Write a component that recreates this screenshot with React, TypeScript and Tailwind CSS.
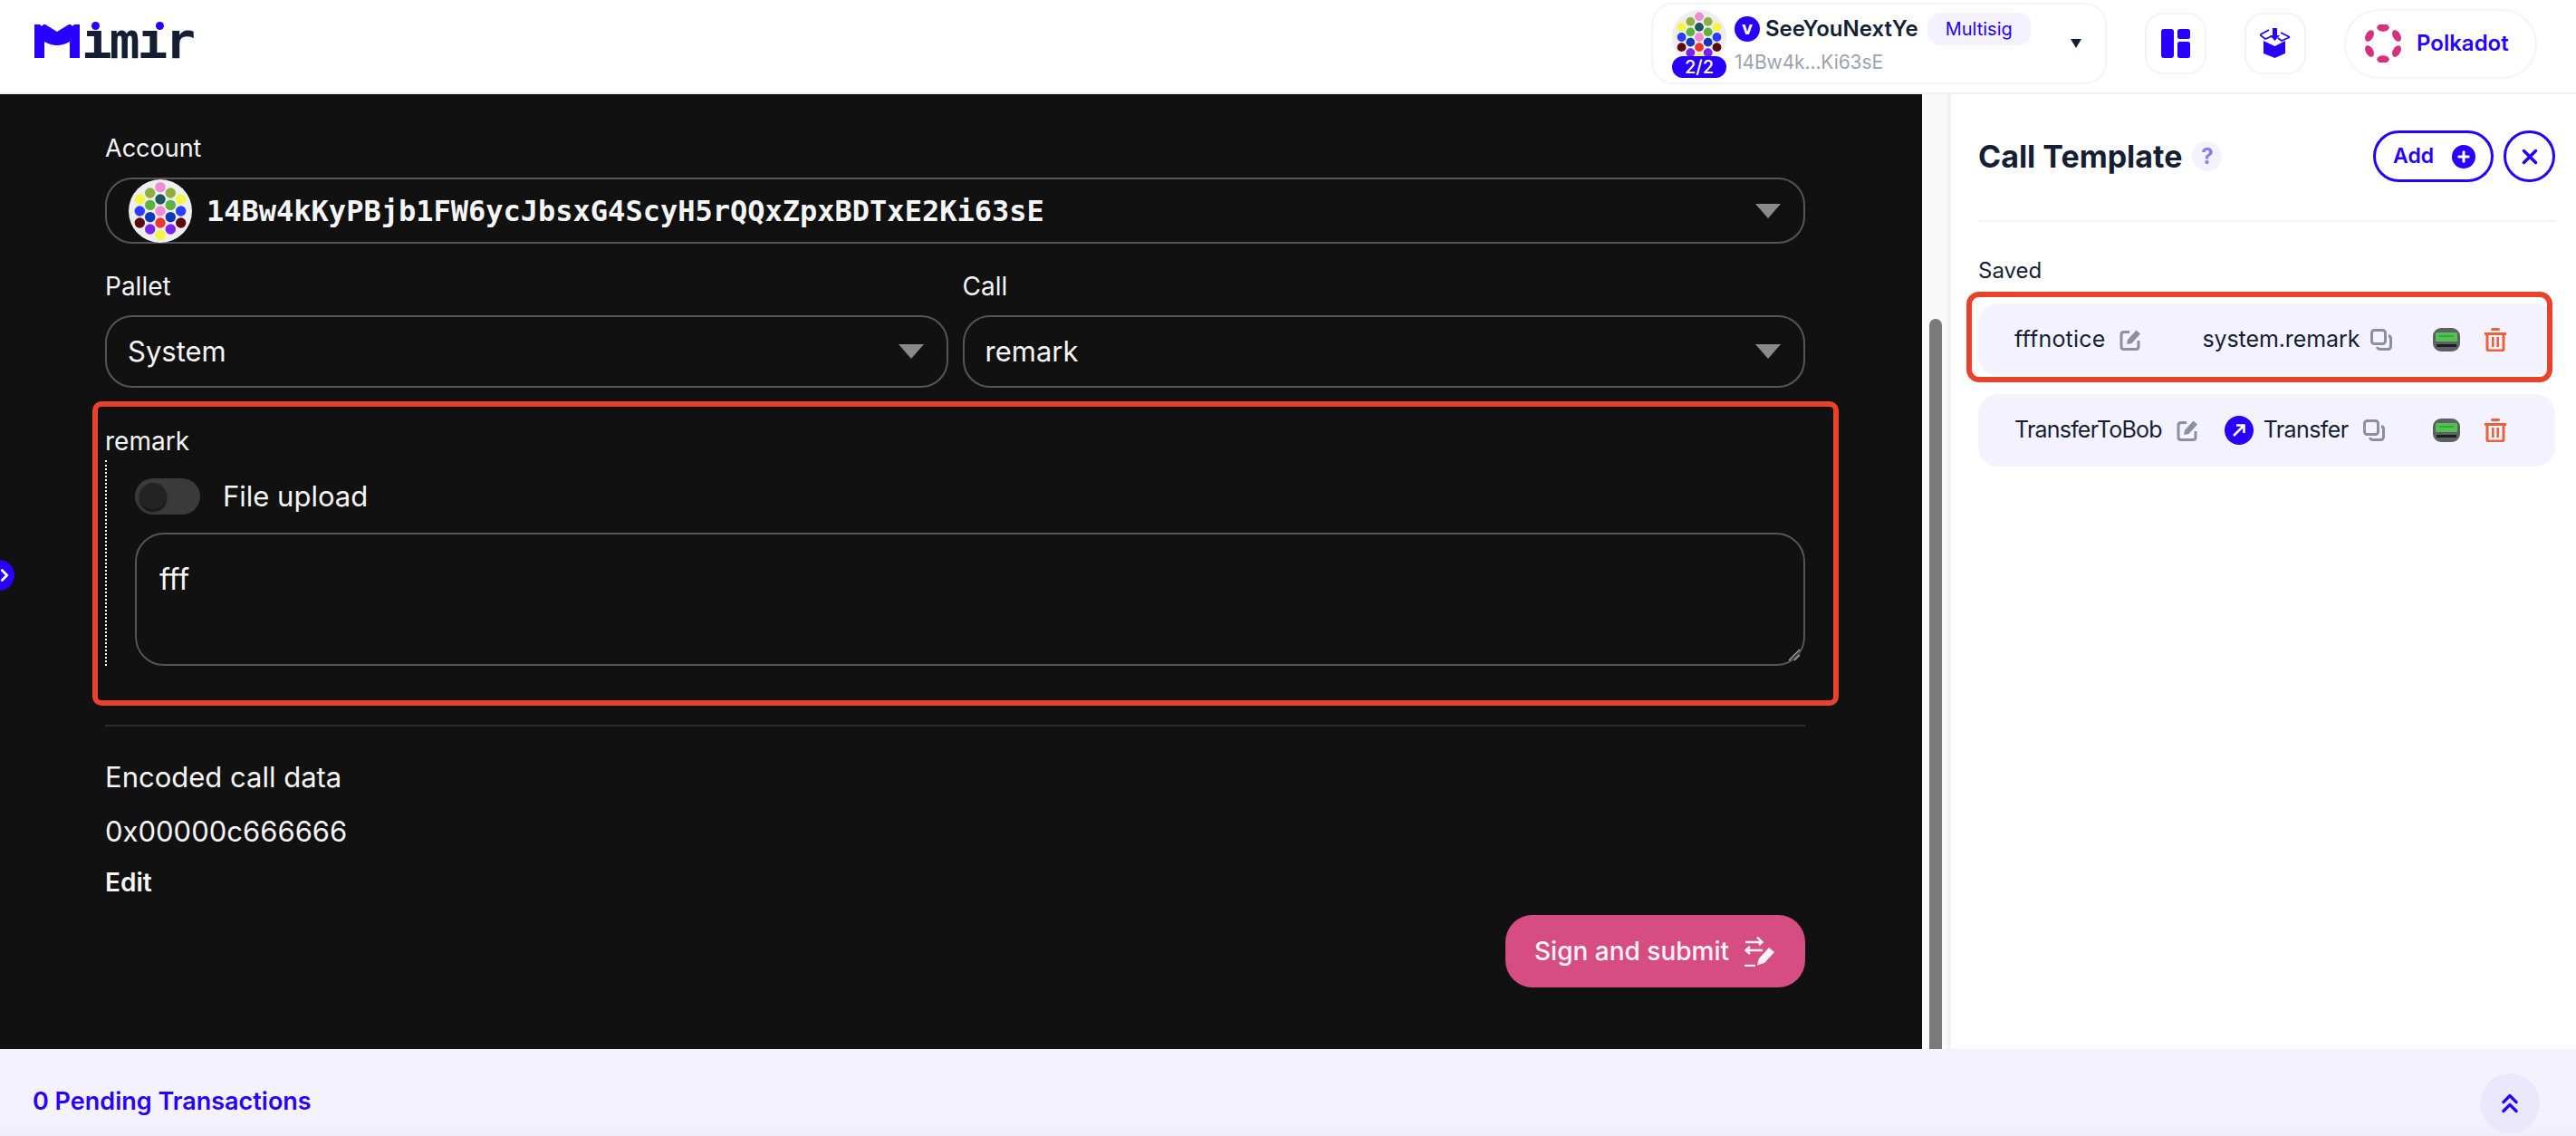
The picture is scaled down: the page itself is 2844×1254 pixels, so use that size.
import React from "react";
import { ChevronRight, ChevronsUp, Plus, X } from "lucide-react";

const BLUE = "#2700FF";

// polkadot style identicon, offsets are from the circle center
const DOTS: [number, number, string][] = [
	[0, -26.4, "#f08ad4"],
	[-11.3, -20, "#8fb040"],
	[11.3, -20, "#8fb040"],
	[-22.7, -13, "#f5f545"],
	[0, -13, "#1f5560"],
	[22.7, -13, "#f5f545"],
	[-11.3, -6.6, "#5cb33c"],
	[11.3, -6.6, "#5cb33c"],
	[-22.7, 0, "#2a3cff"],
	[0, 0, "#f08ad4"],
	[22.7, 0, "#2a3cff"],
	[-11.3, 6.6, "#1038b8"],
	[11.3, 6.6, "#1038b8"],
	[-22.7, 13, "#5a0a10"],
	[0, 13, "#ee3333"],
	[22.7, 13, "#5a0a10"],
	[-11.3, 20, "#7a22ee"],
	[11.3, 20, "#7a22ee"],
	[0, 26.4, "#f5f545"],
];

const Identicon = ({ className }: { className: string }) => (
	<svg viewBox="-35 -35 70 70" className={className}>
		<circle r="35" fill="#eeeeee" />
		{DOTS.map(([x, y, c], i) => (
			<circle key={i} cx={x} cy={y} r="5.7" fill={c} />
		))}
	</svg>
);

const MLogo = () => (
	<svg viewBox="0 0 50 37" className="w-[50px] h-[37px] shrink-0">
		<path d="M0 0 L6 0 Q8 3 10 0 L12 0 L25 8 L38 0 L40 0 Q42 3 44 0 L50 0 L50 37 L39 37 L39 19 Q25 27 11 19 L11 37 L0 37 Z" fill={BLUE} />
	</svg>
);

const Caret = () => (
	<svg viewBox="0 0 28 16" className="w-[28px] h-[16px] shrink-0">
		<path d="M0 0 H28 L14 16 Z" fill="#8a8a8a" />
	</svg>
);

const EditIcon = () => (
	<svg viewBox="0 0 24 24" className="w-[24px] h-[24px] shrink-0">
		<path d="M11 3.5 H5 Q2 3.5 2 6.5 V19.5 Q2 22.5 5 22.5 H18 Q21 22.5 21 19.5 V13" fill="none" stroke="#8e8e9c" strokeWidth="3" />
		<path d="M8 17 L9 12 L18.5 1.5 L23 5.5 L13.5 16 Z" fill="#8e8e9c" />
	</svg>
);

const CopyIcon = () => (
	<svg viewBox="0 0 24 24" className="w-[24px] h-[24px] shrink-0">
		<rect x="1.5" y="1.5" width="15" height="15" rx="3" fill="none" stroke="#8e8e9c" strokeWidth="3" />
		<path d="M20 7.5 Q22.5 8 22.5 11 V19 Q22.5 22.5 19 22.5 H11 Q8 22.5 7.5 20" fill="none" stroke="#8e8e9c" strokeWidth="3" />
	</svg>
);

const PagerIcon = () => (
	<svg viewBox="0 0 30 26" className="w-[30px] h-[26px] shrink-0">
		<rect x="0" y="0" width="30" height="26" rx="9" fill="#5f6064" />
		<rect x="3" y="5" width="24" height="10" rx="1" fill="#4fc24f" />
		<rect x="7" y="8" width="16" height="2" fill="#3aa53c" />
		<rect x="4" y="18" width="22" height="3" fill="#1d1d20" />
	</svg>
);

const TrashIcon = () => (
	<svg viewBox="0 0 24 26" className="w-[24px] h-[26px] shrink-0">
		<rect x="7" y="0" width="10" height="3" rx="1.5" fill="#E8633A" />
		<rect x="0" y="5" width="24" height="3" fill="#E8633A" />
		<path d="M3 8 V23 Q3 25 5 25 H19 Q21 25 21 23 V8" fill="none" stroke="#E8633A" strokeWidth="3" />
		<rect x="8" y="10" width="2.6" height="11" fill="#E8633A" />
		<rect x="13.4" y="10" width="2.6" height="11" fill="#E8633A" />
	</svg>
);

const SignIcon = () => (
	<svg viewBox="0 0 34 34" className="w-[34px] h-[34px]" fill="none" stroke="#fdf3f8" strokeWidth="2.4">
		<path d="M1 7 H19 M14 1.5 L19.5 7 L16 10" />
		<path d="M20 16 H2 M6 12 L1.5 16 L6 20" />
		<path d="M0 33 H12" />
		<path d="M14 32.5 L16 25 L27 13 L33 18 L22 30 Z" fill="#fdf3f8" stroke="none" />
	</svg>
);

const LayoutIcon = () => (
	<svg viewBox="0 0 32 32" className="w-[32px] h-[32px]">
		<rect x="0" y="0" width="14" height="32" rx="3" fill={BLUE} />
		<rect x="18" y="0" width="14" height="11" rx="2.5" fill={BLUE} />
		<rect x="18" y="14" width="14" height="18" rx="2.5" fill={BLUE} />
	</svg>
);

const BoxIcon = () => (
	<svg viewBox="0 0 34 34" className="w-[34px] h-[34px]">
		<path d="M4 14 L16.5 20 L28 14 V28 L16.5 33 L4 28 Z" fill={BLUE} />
		<path d="M14 0 H19 V8 H22 L16.5 14 L11 8 H14 Z" fill={BLUE} />
		<path d="M0 7.5 L10 2 M0 7.5 L6 12 L13 9 M33 10 L24 14 L20 11 M33 10 L23 5" fill="none" stroke={BLUE} strokeWidth="1.7" />
	</svg>
);

const PolkadotLogo = () => (
	<svg viewBox="-20 -21 40 42" className="w-[40px] h-[42px]" fill="#D6317C">
		<ellipse cx="0" cy="-17.5" rx="6.8" ry="4.2" />
		<ellipse cx="0" cy="17.5" rx="6.8" ry="4.2" />
		<ellipse cx="-15" cy="-8.5" rx="6.8" ry="4.2" transform="rotate(-60 -15 -8.5)" />
		<ellipse cx="15" cy="-8.5" rx="6.8" ry="4.2" transform="rotate(60 15 -8.5)" />
		<ellipse cx="-15" cy="8.5" rx="6.8" ry="4.2" transform="rotate(60 -15 8.5)" />
		<ellipse cx="15" cy="8.5" rx="6.8" ry="4.2" transform="rotate(-60 15 8.5)" />
	</svg>
);

const Select = ({ text }: { text: string }) => (
	<div className="h-[80px] flex items-center justify-between border-2 border-[#555] rounded-[30px] pl-[23px] pr-[25px] text-[31px] text-[#f5f5f5]">
		<span>{text}</span>
		<Caret />
	</div>
);

const Logo = () => (
	<div className="relative flex items-end h-[37px] mb-[11px]">
		<MLogo />
		<div className="ml-[2px] w-[124px] h-[32px]">
			<span className="block -mt-[3px] font-['DejaVu_Sans_Mono'] font-bold text-[56px] leading-[32px] whitespace-nowrap text-[#151F34]">
				<span className="tracking-[-3px]">imi</span>r
			</span>
		</div>
		{/* the i dots are blue in the wordmark */}
		<span className="absolute left-[52px] -top-[12px] w-[124px] h-[17px] bg-white" />
		<span className="absolute left-[63px] -top-[3px] w-[9px] h-[9px] rounded-full bg-[#2700FF]" />
		<span className="absolute left-[134px] -top-[3px] w-[9px] h-[9px] rounded-full bg-[#2700FF]" />
	</div>
);

const Header = () => (
	<header className="h-[104px] shrink-0 bg-white border-b-2 border-[#f1f3f9] flex items-center justify-between pl-[38px] pr-[43px]">
		<Logo />
		<div className="flex items-center">
			<div className="w-[503px] h-[90px] mb-[6px] border-2 border-[#f4f2ff] rounded-[24px] flex items-center pl-[21px] pr-[26px]">
				<div className="relative w-[60px] h-[75px] shrink-0">
					<Identicon className="w-[60px] h-[60px]" />
					<div className="absolute left-0 bottom-0 w-[60px] h-[24px] rounded-full bg-[#2700FF] text-white text-[20px] leading-[24px] text-center font-medium">2/2</div>
				</div>
				<div className="ml-[9px] flex-1">
					<div className="flex items-center h-[38px]">
						<span className="w-[28px] h-[28px] rounded-full bg-[#2700FF] text-white text-[20px] leading-[26px] font-bold text-center">v</span>
						<span className="ml-[6px] text-[24px] font-semibold text-[#151F34]">SeeYouNextYe</span>
						<span className="ml-[10px] w-[114px] h-[36px] rounded-[14px] bg-[#f4f2ff] text-[#2700FF] text-[20px] leading-[36px] text-center">Multisig</span>
					</div>
					<div className="text-[21px] leading-[30px] mt-[3px] tracking-[-0.1px] text-[#9CA3AF]">14Bw4k...Ki63sE</div>
				</div>
				<svg viewBox="0 0 12 10" className="w-[12px] h-[10px] shrink-0">
					<path d="M0 0 H12 L6 10 Z" fill="#151F34" />
				</svg>
			</div>
			<button className="ml-[42px] w-[68px] h-[68px] mb-[6px] border-2 border-[#f4f2ff] rounded-[20px] flex items-center justify-center">
				<LayoutIcon />
			</button>
			<button className="ml-[42px] w-[68px] h-[68px] mb-[6px] border-2 border-[#f4f2ff] rounded-[20px] flex items-center justify-center">
				<BoxIcon />
			</button>
			<button className="ml-[42px] w-[213px] h-[77px] mb-[6px] border-2 border-[#f4f2ff] rounded-full flex items-center pl-[21px]">
				<PolkadotLogo />
				<span className="ml-[17px] text-[24px] font-semibold text-[#2700FF]">Polkadot</span>
			</button>
		</div>
	</header>
);

const FormPanel = () => (
	<div className="relative flex-1 min-w-0 bg-[#111112] pl-[116px] pr-[129px] pt-[43px] text-[#f5f5f5] overflow-hidden">
		<div className="text-[27px] leading-[34px]">Account</div>
		<div className="mt-[15px] h-[73px] flex items-center justify-between border-2 border-[#555] rounded-[30px] pl-[24px] pr-[25px]">
			<div className="flex items-center">
				<Identicon className="w-[70px] h-[70px]" />
				<span className="ml-[16px] font-['DejaVu_Sans_Mono'] font-bold text-[32px]">14Bw4kKyPBjb1FW6ycJbsxG4ScyH5rQQxZpxBDTxE2Ki63sE</span>
			</div>
			<Caret />
		</div>
		<div className="mt-[30px] grid grid-cols-2 gap-x-[16px]">
			<div>
				<div className="text-[28px] leading-[34px] mb-[15px]">Pallet</div>
				<Select text="System" />
			</div>
			<div>
				<div className="text-[28px] leading-[34px] mb-[15px]">Call</div>
				<Select text="remark" />
			</div>
		</div>
		<div className="mt-[42px] text-[28px] leading-[34px]">remark</div>
		<div className="mt-[4px] h-[227px] border-l-2 border-dotted border-white pl-[31px] pt-[20px]">
			<div className="flex items-center h-[40px]">
				<div className="w-[72px] h-[40px] rounded-full bg-[#3a3a3a] pl-[5px] pt-[5px]">
					<div className="w-[30px] h-[30px] rounded-full bg-[#232323] shadow-[0_2px_2px_#111]" />
				</div>
				<span className="ml-[25px] text-[31px]">File upload</span>
			</div>
			<div className="relative mt-[20px] h-[147px] border-2 border-[#555] rounded-[32px] pl-[25px] pt-[28px] text-[32px] leading-[44px]">
				fff
				<svg viewBox="0 0 14 14" className="absolute right-[3px] bottom-[3px] w-[14px] h-[14px]" stroke="#aaa" strokeWidth="1.4">
					<path d="M1 13 L13 1 M7 13 L13 7" />
				</svg>
			</div>
		</div>
		<div className="mt-[65px] h-[2px] bg-[#2b2b2b]" />
		<div className="mt-[36px] text-[31px] leading-[40px]">Encoded call data</div>
		<div className="mt-[20px] text-[31px] leading-[40px]">0x00000c666666</div>
		<div className="mt-[18px] text-[28px] leading-[36px] font-semibold">Edit</div>
		<div className="flex justify-end mt-[18px]">
			<button className="w-[331px] h-[80px] rounded-[30px] bg-[#D64D82] flex items-center pl-[32px] text-[#fdf3f8] text-[28px] font-medium">
				Sign and submit
				<span className="ml-[17px]"><SignIcon /></span>
			</button>
		</div>
		{/* annotation + floating expander */}
		<div className="absolute left-[102px] top-[339px] w-[1928px] h-[336px] border-[6px] border-[#E8432A] rounded-[10px]" />
		<div className="absolute -left-[18px] top-[514px] w-[34px] h-[34px] rounded-full bg-[#2700FF] flex items-center justify-end text-white">
			<ChevronRight size={22} strokeWidth={3} />
		</div>
	</div>
);

const Row = ({ name, nameClass, call, callClass, gap, transfer }: { name: string; nameClass: string; call: string; callClass: string; gap: string; transfer?: boolean }) => (
	<div className="h-[80px] rounded-[22px] bg-[#f4f2ff] flex items-center pl-[40px] text-[25px] text-[#151F34]">
		<span className={nameClass}>{name}</span>
		<span className="ml-[16px]"><EditIcon /></span>
		<span className={gap}>
			{transfer && (
				<span className="w-[32px] h-[32px] mr-[11px] rounded-full bg-[#2700FF] flex items-center justify-center">
					<svg viewBox="0 0 16 16" className="w-[16px] h-[16px]" fill="none" stroke="#fff" strokeWidth="2.6">
						<path d="M2 14 L13 3 M5 2.5 H13.5 V11" />
					</svg>
				</span>
			)}
			<span className={callClass}>{call}</span>
			<span className="ml-[16px]"><CopyIcon /></span>
		</span>
		<span className="ml-auto mr-[54px] flex items-center gap-[27px]">
			<PagerIcon />
			<TrashIcon />
		</span>
	</div>
);

const TemplatePanel = () => (
	<aside className="relative w-[722px] shrink-0 flex">
		<div className="w-[28px] bg-[#f9f9f9] relative">
			<div className="absolute left-[8px] right-[6px] top-[248px] bottom-0 bg-[#7a7a7a] rounded-t-[7px]" />
		</div>
		<div className="flex-1 bg-white border-l-4 border-[#f1f1f6] pl-[30px] pr-[23px] pt-[40px]">
			<div className="flex items-center justify-between h-[57px]">
				<div className="flex items-center">
					<span className="text-[34px] font-bold text-[#151F34]">Call Template</span>
					<span className="ml-[11px] w-[33px] h-[33px] rounded-full bg-[#f4f2ff] text-[#8b7bf5] text-[24px] leading-[33px] font-bold text-center">?</span>
				</div>
				<div className="flex items-center gap-[11px]">
					<button className="w-[133px] h-[57px] rounded-full border-[3px] border-[#2700FF] flex items-center justify-between pl-[19px] pr-[17px] text-[#2700FF] text-[23px] font-semibold">
						Add
						<span className="w-[26px] h-[26px] rounded-full bg-[#2700FF] flex items-center justify-center">
							<Plus size={18} strokeWidth={4} color="#fff" />
						</span>
					</button>
					<button className="w-[57px] h-[57px] rounded-full border-[3px] border-[#2700FF] flex items-center justify-center">
						<X size={26} strokeWidth={3.2} color={BLUE} />
					</button>
				</div>
			</div>
			<div className="mt-[42px] h-[2px] bg-[#f4f4f8]" />
			<div className="mt-[38px] text-[24px] leading-[32px] text-[#151F34]">Saved</div>
			<div className="mt-[20px] flex flex-col gap-[20px]">
				<Row name="fffnotice" nameClass="tracking-[0.2px]" call="system.remark" callClass="tracking-[-0.1px] -mr-[4px]" gap="ml-[67px] flex items-center" />
				<Row name="TransferToBob" nameClass="tracking-[-0.8px]" call="Transfer" callClass="tracking-[-0.6px]" gap="ml-[29px] flex items-center" transfer />
			</div>
		</div>
		<div className="absolute left-[49px] top-[218px] w-[647px] h-[100px] border-[6px] border-[#E8432A] rounded-[14px]" />
	</aside>
);

const Footer = () => (
	<footer className="h-[96px] shrink-0 bg-gradient-to-b from-[#f4f2ff] from-80% to-[#eeedf8] flex items-center justify-between pl-[36px] pr-[40px]">
		<span className="text-[27px] font-semibold text-[#2700FF] mt-[20px]">0 Pending Transactions</span>
		<button className="w-[66px] h-[66px] mt-[24px] rounded-full bg-[#ebe8fd] flex items-center justify-center">
			<ChevronsUp size={34} strokeWidth={2.4} color={BLUE} />
		</button>
	</footer>
);

export default function App() {
	return (
		<div className="w-[2844px] h-[1254px] flex flex-col overflow-hidden font-['Inter',sans-serif]">
			<Header />
			<main className="flex-1 flex min-h-0">
				<FormPanel />
				<TemplatePanel />
			</main>
			<Footer />
		</div>
	);
}
